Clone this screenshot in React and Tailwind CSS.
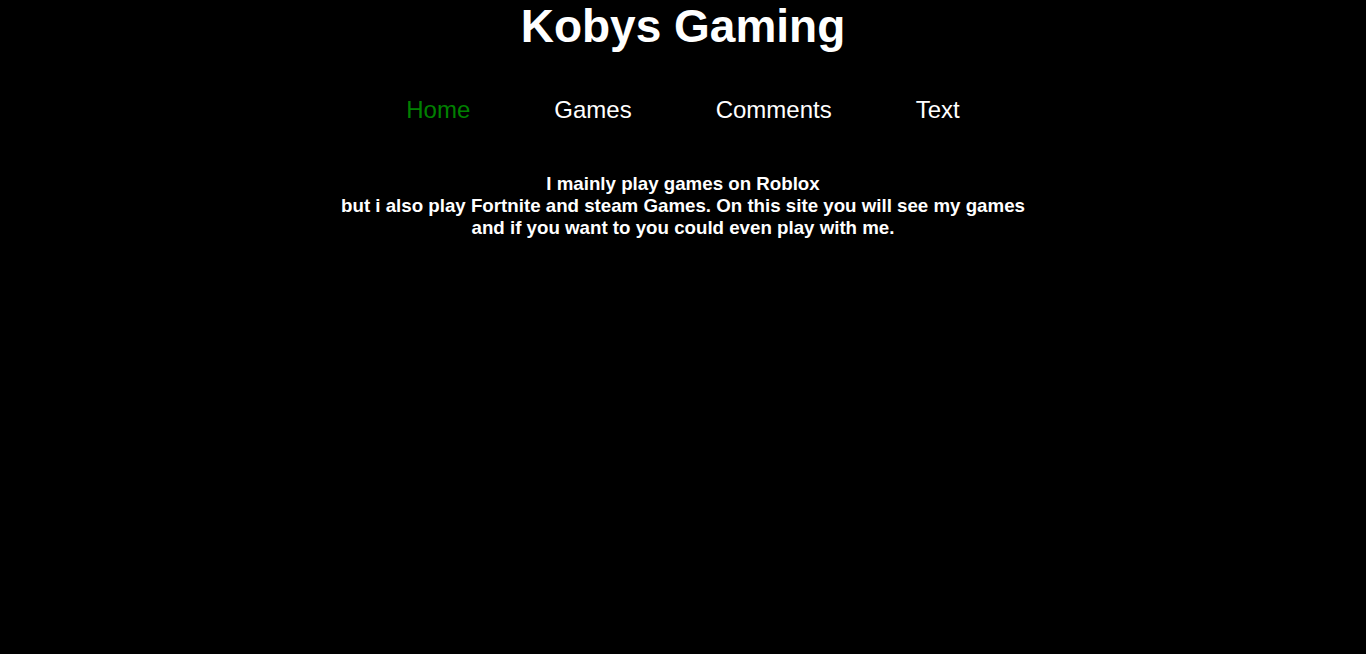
export default function App() {
  return (
    <div className="min-h-[654px] w-full bg-black text-white" style={{ fontFamily: '"Liberation Sans", Arial, sans-serif' }}>
      <h1 className="m-0 text-center text-[46px] font-bold leading-[52px]">Kobys Gaming</h1>
      <nav className="mt-[44px] flex justify-center gap-[84px] text-[24px] leading-[28px]">
        <a className="text-[#008000]">Home</a>
        <a className="text-white">Games</a>
        <a className="text-white">Comments</a>
        <a className="text-white">Text</a>
      </nav>
      <h3 className="mt-[49px] text-center text-[18.72px] font-bold leading-[22px]">
        I mainly play games on Roblox
        <br />
        but i also play Fortnite and steam Games. On this site you will see my games
        <br />
        and if you want to you could even play with me.
      </h3>
    </div>
  );
}
